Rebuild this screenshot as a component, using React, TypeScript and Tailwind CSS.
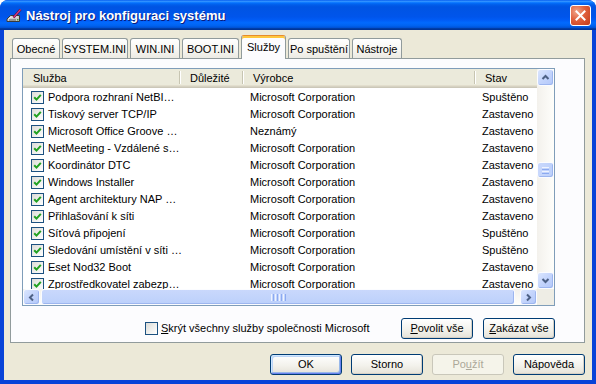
import React from 'react';

type Row = { name: string; maker: string; state: string };

const rows: Row[] = [
  { name: 'Podpora rozhraní NetBI…', maker: 'Microsoft Corporation', state: 'Spuštěno' },
  { name: 'Tiskový server TCP/IP', maker: 'Microsoft Corporation', state: 'Zastaveno' },
  { name: 'Microsoft Office Groove …', maker: 'Neznámý', state: 'Zastaveno' },
  { name: 'NetMeeting - Vzdálené s…', maker: 'Microsoft Corporation', state: 'Zastaveno' },
  { name: 'Koordinátor DTC', maker: 'Microsoft Corporation', state: 'Zastaveno' },
  { name: 'Windows Installer', maker: 'Microsoft Corporation', state: 'Zastaveno' },
  { name: 'Agent architektury NAP …', maker: 'Microsoft Corporation', state: 'Zastaveno' },
  { name: 'Přihlašování k síti', maker: 'Microsoft Corporation', state: 'Zastaveno' },
  { name: 'Síťová připojení', maker: 'Microsoft Corporation', state: 'Spuštěno' },
  { name: 'Sledování umístění v síti …', maker: 'Microsoft Corporation', state: 'Spuštěno' },
  { name: 'Eset Nod32 Boot', maker: 'Microsoft Corporation', state: 'Zastaveno' },
  { name: 'Zprostředkovatel zabezp…', maker: 'Microsoft Corporation', state: 'Zastaveno' },
];

const tabs = [
  { label: 'Obecné', w: 'w-[48px]' },
  { label: 'SYSTEM.INI', w: 'w-[66px]' },
  { label: 'WIN.INI', w: 'w-[50px]' },
  { label: 'BOOT.INI', w: 'w-[57px]' },
  { label: 'Služby', w: 'w-[45px]', active: true },
  { label: 'Po spuštění', w: 'w-[62px]' },
  { label: 'Nástroje', w: 'w-[50px]' },
];

function CheckBox({ checked }: { checked: boolean }) {
  return (
    <div className="flex h-[13px] w-[13px] shrink-0 items-center justify-center border border-[#1c5180] bg-[linear-gradient(135deg,#dcdcd7_0%,#ffffff_100%)]">
      {checked && (
        <svg width="9" height="9" viewBox="0 0 9 9">
          <path d="M1.2 4.2 L3.5 6.6 L7.8 1.8" fill="none" stroke="#21a121" strokeWidth="2" />
        </svg>
      )}
    </div>
  );
}

function Arrow({ dir }: { dir: 'up' | 'down' | 'left' | 'right' }) {
  const d = {
    up: 'M1.5 6 L4.5 3 L7.5 6',
    down: 'M1.5 3 L4.5 6 L7.5 3',
    left: 'M6 1.5 L3 4.5 L6 7.5',
    right: 'M3 1.5 L6 4.5 L3 7.5',
  }[dir];
  return (
    <svg width="9" height="9" viewBox="0 0 9 9">
      <path d={d} fill="none" stroke="#4d6185" strokeWidth="2" />
    </svg>
  );
}

function ScrollButton({ dir, className }: { dir: 'up' | 'down' | 'left' | 'right'; className: string }) {
  return (
    <div
      className={`flex shrink-0 items-center justify-center rounded-[3px] border border-[#fbfcff] bg-[linear-gradient(135deg,#dbe6fe_0%,#c3d4fc_50%,#b3c8fa_100%)] shadow-[inset_-1px_-1px_0_#9db6ef] ${className}`}
    >
      <Arrow dir={dir} />
    </div>
  );
}

function XpButton({ children, variant }: { children: React.ReactNode; variant?: 'default' | 'disabled' }) {
  if (variant === 'disabled') {
    return (
      <div className="flex h-[21px] w-[72px] items-center justify-center rounded-[3px] border border-[#c9c7ba] bg-[#f5f4ea] text-[#aca899]">
        {children}
      </div>
    );
  }
  return (
    <div
      className={`flex h-[21px] w-[72px] items-center justify-center rounded-[3px] border border-[#003c74] bg-[linear-gradient(180deg,#ffffff_0%,#f3f2ec_55%,#e5e2d8_100%)] text-black ${
        variant === 'default'
          ? 'shadow-[inset_-1px_-1px_0_#6982ee,inset_1px_1px_0_#cee7ff,inset_-2px_-2px_0_#98b8ea,inset_2px_2px_0_#bcd4f6]'
          : 'shadow-[inset_-1px_-1px_0_#d6d0c5]'
      }`}
    >
      {children}
    </div>
  );
}

function HeaderCell({ label, w, pl }: { label: string; w: string; pl: string }) {
  return (
    <div className={`flex h-full shrink-0 items-center ${w}`}>
      <span className={`flex-1 whitespace-nowrap ${pl}`}>{label}</span>
      <div className="mb-[2px] h-[13px] w-[2px] border-l border-r border-l-[#c7c5b2] border-r-white" />
    </div>
  );
}

function AppIcon() {
  return (
    <svg width="16" height="16" viewBox="0 0 16 16">
      <path d="M1 11 L4.5 7.5 L13.5 7.5 L13.5 13.5 L1 13.5 Z" fill="#c9c9c9" stroke="#3a3a3a" strokeWidth="1" />
      <path d="M2.5 11 L5 9 L11.5 9" fill="none" stroke="#f4f4f4" strokeWidth="1" />
      <rect x="3" y="11.5" width="7" height="1" fill="#5a5a5a" />
      <rect x="11" y="11" width="1.5" height="1.5" fill="#3aa13a" />
      <path d="M7.5 9.5 L14.5 1.5" stroke="#5a0f36" strokeWidth="2.6" />
      <path d="M7.5 9.5 L14.5 1.5" stroke="#d23b86" strokeWidth="1.2" />
    </svg>
  );
}

export default function App() {
  return (
    <div className="h-[384px] w-[596px] overflow-hidden bg-white font-['Liberation_Sans',Arial,sans-serif] text-[11px] text-black">
      <div className="flex h-full flex-col rounded-t-[8px] bg-[#0843d8]">
        {/* title bar */}
        <div className="flex h-[30px] shrink-0 items-center rounded-t-[8px] bg-[linear-gradient(180deg,#0058ee_0%,#3593ff_4%,#288eff_6%,#127dff_8%,#036ffc_10%,#0262ee_14%,#0057e5_20%,#0054e3_24%,#0055eb_56%,#005bf5_66%,#026afe_76%,#0062ef_86%,#0052d6_92%,#0040ab_94%,#003092_100%)] pl-[6px] pr-[5px] pt-[2px]">
          <AppIcon />
          <span className="ml-[4px] flex-1 text-[13px] font-bold text-white [text-shadow:1px_1px_#0a1a7a]">
            Nástroj pro konfiguraci systému
          </span>
          <div className="-mt-[2px] flex h-[21px] w-[21px] items-center justify-center rounded-[3px] border border-white bg-[radial-gradient(circle_at_30%_30%,#f0a58a_0%,#e0603c_45%,#c23a19_100%)]">
            <svg width="11" height="11" viewBox="0 0 11 11">
              <path d="M1.5 1.5 L9.5 9.5 M9.5 1.5 L1.5 9.5" stroke="white" strokeWidth="2" strokeLinecap="square" />
            </svg>
          </div>
        </div>

        {/* body */}
        <div className="flex flex-1 px-[4px] pb-[4px]">
          <div className="flex flex-1 flex-col bg-[#ece9d8] pt-[5px]">
            {/* tabs */}
            <div className="flex h-[23px] items-end gap-[2px] pl-[8px]">
              {tabs.map((t) =>
                t.active ? (
                  <div
                    key={t.label}
                    className={`relative z-10 -mb-px flex h-[24px] items-center justify-center rounded-t-[3px] border border-b-0 border-[#919b9c] border-t-[#e68b2c] bg-[#fcfcfe] shadow-[inset_0_2px_0_#ffc73c] ${t.w}`}
                  >
                    {t.label}
                  </div>
                ) : (
                  <div
                    key={t.label}
                    className={`flex h-[20px] items-center justify-center rounded-t-[3px] border border-b-0 border-[#919b9c] bg-[linear-gradient(180deg,#ffffff_0%,#f6f5f0_60%,#eceae3_100%)] pt-[1px] ${t.w}`}
                  >
                    {t.label}
                  </div>
                )
              )}
            </div>

            {/* panel */}
            <div className="ml-[6px] h-[285px] w-[575px] border border-[#919b9c] bg-[#fcfcfe] pl-[11px] pt-[9px]">
              {/* list view */}
              <div className="flex h-[238px] w-[533px] flex-col border border-[#7f9db9] bg-white">
                <div className="flex h-[220px]">
                  <div className="w-[514px] overflow-hidden">
                    <div className="flex h-[19px] bg-[#ebeadb] shadow-[inset_0_-1px_0_#cbc7b8,inset_0_-2px_0_#d6d2c2,inset_0_-3px_0_#e2decd]">
                      <HeaderCell label="Služba" w="w-[158px]" pl="pl-[10px]" />
                      <HeaderCell label="Důležité" w="w-[63px]" pl="pl-[9px]" />
                      <HeaderCell label="Výrobce" w="w-[232px]" pl="pl-[9px]" />
                      <div className="flex h-full w-[61px] items-center pl-[9px]">Stav</div>
                    </div>
                    {rows.map((r) => (
                      <div key={r.name} className="flex h-[17px] items-center pt-[1px]">
                        <div className="flex w-[158px] shrink-0 items-center pl-[8px]">
                          <CheckBox checked />
                          <span className="ml-[4px] whitespace-nowrap">{r.name}</span>
                        </div>
                        <div className="w-[63px] shrink-0" />
                        <div className="w-[232px] shrink-0 whitespace-nowrap pl-[6px]">{r.maker}</div>
                        <div className="w-[61px] shrink-0 overflow-hidden whitespace-nowrap pl-[6px]">{r.state}</div>
                      </div>
                    ))}
                  </div>
                  {/* vertical scrollbar */}
                  <div className="flex w-[17px] flex-col bg-[linear-gradient(90deg,#f3f1ec_0%,#fefefb_100%)]">
                    <ScrollButton dir="up" className="h-[17px] w-[17px]" />
                    <div className="h-[76px]" />
                    <div className="flex h-[16px] flex-col items-center justify-center gap-[1px] rounded-[3px] border border-[#fbfcff] bg-[linear-gradient(90deg,#c9d8fc_0%,#bcd0fb_100%)] shadow-[inset_-1px_-1px_0_#9db6ef]">
                      <div className="h-px w-[7px] bg-[#eef3fe]" />
                      <div className="h-px w-[7px] bg-[#8caaf0]" />
                      <div className="h-px w-[7px] bg-[#eef3fe]" />
                      <div className="h-px w-[7px] bg-[#8caaf0]" />
                    </div>
                    <div className="flex-1" />
                    <ScrollButton dir="down" className="h-[17px] w-[17px]" />
                  </div>
                </div>
                <div className="flex h-[16px]">
                  {/* horizontal scrollbar */}
                  <div className="flex w-[514px] bg-[linear-gradient(180deg,#f3f1ec_0%,#fefefb_100%)]">
                    <ScrollButton dir="left" className="h-[16px] w-[17px]" />
                    <div className="ml-px flex h-[16px] w-[474px] items-center justify-center gap-[1px] rounded-[3px] border border-[#fbfcff] bg-[linear-gradient(180deg,#c9d8fc_0%,#bcd0fb_100%)] shadow-[inset_-1px_-1px_0_#9db6ef]">
                      <div className="h-[7px] w-px bg-[#eef3fe]" />
                      <div className="h-[7px] w-px bg-[#8caaf0]" />
                      <div className="h-[7px] w-px bg-[#eef3fe]" />
                      <div className="h-[7px] w-px bg-[#8caaf0]" />
                      <div className="h-[7px] w-px bg-[#eef3fe]" />
                      <div className="h-[7px] w-px bg-[#8caaf0]" />
                      <div className="h-[7px] w-px bg-[#eef3fe]" />
                      <div className="h-[7px] w-px bg-[#8caaf0]" />
                    </div>
                    <div className="flex-1" />
                    <ScrollButton dir="right" className="h-[16px] w-[17px]" />
                  </div>
                  <div className="w-[17px] bg-[#eeede5]" />
                </div>
              </div>

              {/* options row */}
              <div className="mt-[12px] flex h-[21px] w-[533px] items-center">
                <div className="ml-[123px] flex items-center">
                  <CheckBox checked={false} />
                  <span className="ml-[3px] whitespace-nowrap">
                    <span className="underline">S</span>krýt všechny služby společnosti Microsoft
                  </span>
                </div>
                <div className="flex-1" />
                <div className="flex gap-[10px]">
                  <XpButton>
                    <span>
                      <span className="underline">P</span>ovolit vše
                    </span>
                  </XpButton>
                  <XpButton>
                    <span>
                      <span className="underline">Z</span>akázat vše
                    </span>
                  </XpButton>
                </div>
              </div>
            </div>

            {/* dialog buttons */}
            <div className="mt-[11px] flex justify-end gap-[9px] pr-[7px]">
              <XpButton variant="default">OK</XpButton>
              <XpButton>Storno</XpButton>
              <XpButton variant="disabled">
                <span>
                  Po<span className="underline">u</span>žít
                </span>
              </XpButton>
              <XpButton>Nápověda</XpButton>
            </div>
          </div>
        </div>
      </div>
    </div>
  );
}
